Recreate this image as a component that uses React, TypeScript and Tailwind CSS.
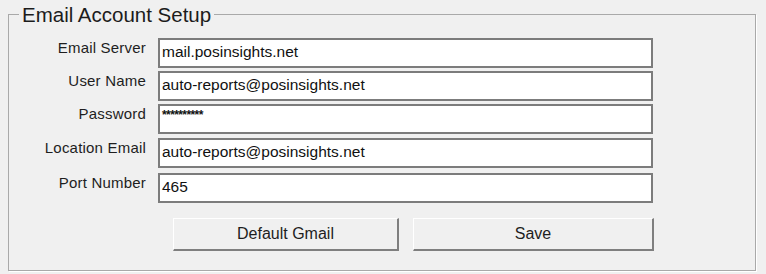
import React from "react";

const rows: { label: string; value: string; mt: string; pw?: boolean }[] = [
  { label: "Email Server", value: "mail.posinsights.net", mt: "mt-[12px]" },
  { label: "User Name", value: "auto-reports@posinsights.net", mt: "mt-[3px]" },
  { label: "Password", value: "**********", mt: "mt-[3px]", pw: true },
  { label: "Location Email", value: "auto-reports@posinsights.net", mt: "mt-[4px]" },
  { label: "Port Number", value: "465", mt: "mt-[5px]" },
];

export default function App() {
  return (
    <div
      className="w-[766px] h-[274px] bg-[#f0f0f0] overflow-hidden"
      style={{ fontFamily: '"Liberation Sans", Arial, sans-serif' }}
    >
      <fieldset className="ml-[8px] mt-[3px] w-[748px] h-[268px] border border-[#a9a9a9] shadow-[1px_1px_0_#ffffff]">
        <legend className="ml-[10px] px-[3px] text-[20.5px] leading-[23px] text-[#1c1c1c]">
          Email Account Setup
        </legend>
        <div className="flex flex-col">
          {rows.map((r, i) => (
            <div key={i} className={`flex items-start ${r.mt}`}>
              <div className="w-[137px] pt-[1px] text-right text-[15px] leading-[18px] text-[#1e1e1e] tracking-[0.2px]">
                {r.label}
              </div>
              <div className="ml-[12px] w-[495px] h-[30px] bg-white border-2 border-[#7c7c7c] px-[2px] pt-[3px] text-[15.5px] leading-[18px] text-[#111]">
                {r.pw ? (
                  <span className="text-[12px] leading-[12px] tracking-[-0.6px] font-bold align-top">{r.value}</span>
                ) : (
                  r.value
                )}
              </div>
            </div>
          ))}
          <div className="flex mt-[15px] ml-[164px]">
            <button className="w-[226px] h-[33px] bg-[#f0f0f0] border-t border-l border-t-white border-l-white border-b-2 border-r-2 border-b-[#7f7f7f] border-r-[#7f7f7f] text-[16px] text-[#1e1e1e]">
              Default Gmail
            </button>
            <button className="ml-[14px] w-[241px] h-[33px] bg-[#f0f0f0] border-t border-l border-t-white border-l-white border-b-2 border-r-2 border-b-[#7f7f7f] border-r-[#7f7f7f] text-[16px] text-[#1e1e1e]">
              Save
            </button>
          </div>
        </div>
      </fieldset>
    </div>
  );
}
